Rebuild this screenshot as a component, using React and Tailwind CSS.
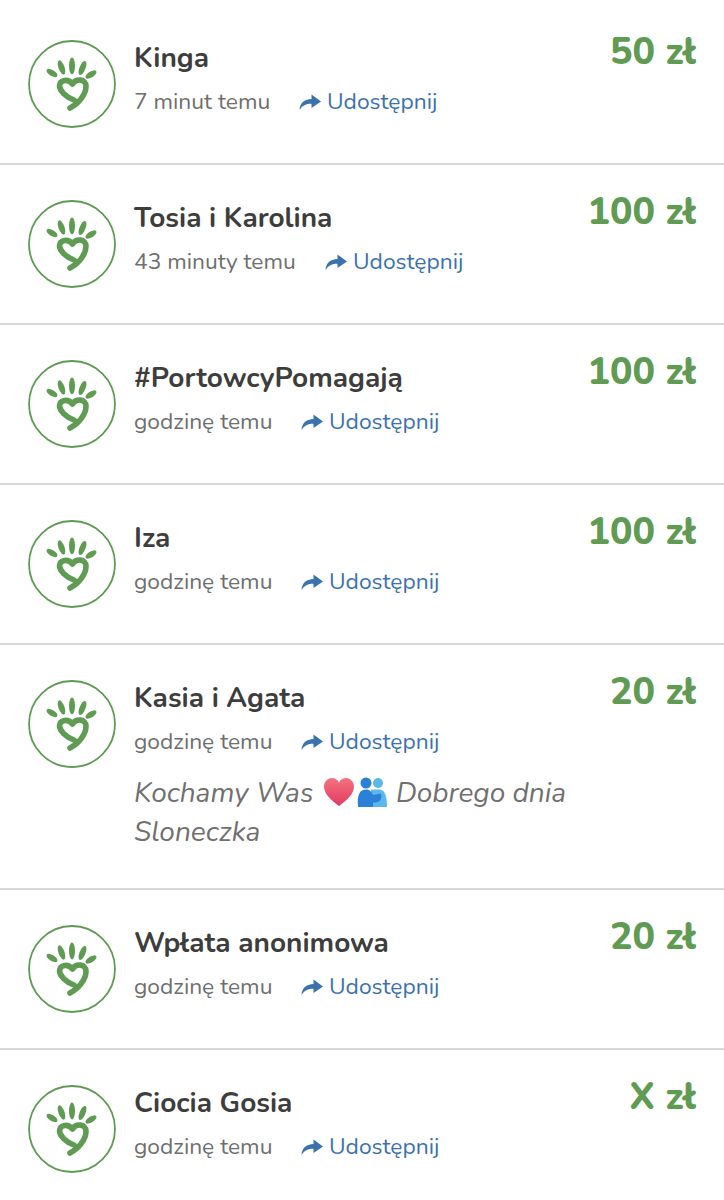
const DONATIONS = [
  { name: 'Kinga', time: '7 minut temu', amount: '50 zł', timeWidth: 'w-[165px]' },
  { name: 'Tosia i Karolina', time: '43 minuty temu', amount: '100 zł', timeWidth: 'w-[191px]' },
  { name: '#PortowcyPomagają', time: 'godzinę temu', amount: '100 zł', timeWidth: 'w-[167px]' },
  { name: 'Iza', time: 'godzinę temu', amount: '100 zł', timeWidth: 'w-[167px]' },
  { name: 'Kasia i Agata', time: 'godzinę temu', amount: '20 zł', timeWidth: 'w-[167px]', message: true },
  { name: 'Wpłata anonimowa', time: 'godzinę temu', amount: '20 zł', timeWidth: 'w-[167px]' },
  { name: 'Ciocia Gosia', time: 'godzinę temu', amount: 'X zł', timeWidth: 'w-[167px]' },
];

function Logo() {
  return (
    <svg viewBox="0 0 88 88" className="w-[88px] h-[88px] shrink-0">
      <circle cx="44" cy="44" r="43" fill="none" stroke="#5f9b52" strokeWidth="1.8" />
      <g fill="#5f9b52">
        <ellipse cx="24" cy="33" rx="3" ry="6.2" transform="rotate(-58 24 33)" />
        <ellipse cx="33.5" cy="27.5" rx="3" ry="7.5" transform="rotate(-20 33.5 27.5)" />
        <ellipse cx="44" cy="26" rx="3" ry="8.5" />
        <ellipse cx="54.5" cy="28" rx="3" ry="7.5" transform="rotate(22 54.5 28)" />
        <ellipse cx="63" cy="34.5" rx="3" ry="6.2" transform="rotate(58 63 34.5)" />
      </g>
      <path
        d="M46 60 C38 57 31.5 51 31.5 45.5 C32 40 40 38 44.5 44 C48 38 58 39 58 46 C58 55 50 64 42 68"
        fill="none"
        stroke="#5f9b52"
        strokeWidth="5.6"
        strokeLinejoin="round"
        strokeLinecap="round"
      />
    </svg>
  );
}

function ShareArrow() {
  return (
    <svg viewBox="0 0 22 16" className="w-[22px] h-[16px] shrink-0">
      <path d="M0.5 16 C1 9 5 5.5 12.5 5 L12.5 0.5 L22 7.5 L12.5 14 L12.5 9.8 C7 9.8 3.5 11.5 0.5 16 Z" fill="#3a72ae" />
    </svg>
  );
}

function HeartEmoji() {
  return (
    <svg viewBox="0 0 32 30" className="w-[32px] h-[30px]">
      <defs>
        <linearGradient id="heartFill" x1="0" y1="0" x2="0" y2="1">
          <stop offset="0" stopColor="#f4727f" />
          <stop offset="1" stopColor="#e23a62" />
        </linearGradient>
      </defs>
      <path d="M16 29 C8 23 1 17 1 9.5 C1 4.5 5 1 9 1 C12 1 14.6 2.6 16 5.5 C17.4 2.6 20 1 23 1 C27 1 31 4.5 31 9.5 C31 17 24 23 16 29 Z" fill="url(#heartFill)" />
    </svg>
  );
}

function HugEmoji() {
  return (
    <svg viewBox="0 0 30 30" className="w-[30px] h-[30px]">
      <circle cx="21" cy="6" r="5" fill="#5cb8ea" />
      <path d="M14 12.5 H22 C27 12.5 30 17 30 30 H14 Z" fill="#5cb8ea" />
      <circle cx="9" cy="6" r="5.5" fill="#2b80d8" />
      <path d="M1 30 C0 17 3 12.5 9 12.5 C13 12.5 15 15 16 18 L24 16.5 C25.5 21 23 25.5 19 25.5 L16 25.5 L16 30 Z" fill="#2b80d8" />
    </svg>
  );
}

function DonationRow({ donation }) {
  return (
    <div className="flex items-start px-[28px] py-[35px] border-b-2 border-[#d8d8d8] last:border-b-0">
      <Logo />
      <div className="flex-1 min-w-0 ml-[18px] -mt-[1px]">
        <div className="text-[28px] leading-[38px] font-bold text-[#3d3d3d]">{donation.name}</div>
        <div className="flex items-center h-[32px] mt-[9px] text-[22.8px] text-[#6f6f6f]">
          <span className={donation.timeWidth}>{donation.time}</span>
          <ShareArrow />
          <span className="ml-[6px] text-[#3a72ae]">Udostępnij</span>
        </div>
        {donation.message && (
          <div className="w-[450px] mt-[16px] mb-[1px] text-[28px] leading-[39px] italic text-[#707070]">
            <span>Kochamy Was </span>
            <span className="inline-flex gap-[2px] mx-[2px] align-[-5px]">
              <HeartEmoji />
              <HugEmoji />
            </span>
            <span> Dobrego dnia</span>
            <br />
            <span>Sloneczka</span>
          </div>
        )}
      </div>
      <div className="-mt-[12px] text-[37.5px] leading-[48px] font-extrabold text-[#5f9b52] whitespace-nowrap">
        {donation.amount}
      </div>
    </div>
  );
}

export default function App() {
  return (
    <div className="w-[724px] h-[1200px] overflow-hidden bg-white pt-[5px] font-['Nunito','Noto_Sans','Open_Sans',sans-serif]">
      {DONATIONS.map((donation) => (
        <DonationRow key={donation.name} donation={donation} />
      ))}
    </div>
  );
}
